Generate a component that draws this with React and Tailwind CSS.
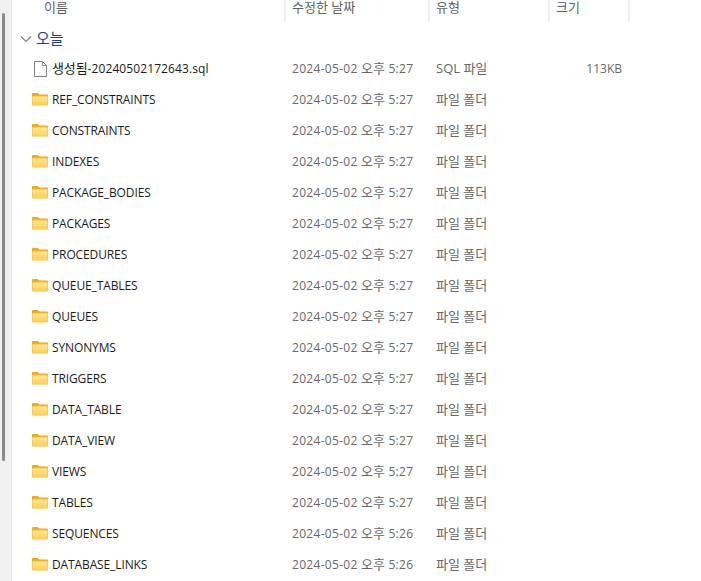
const rows = [
  ["REF_CONSTRAINTS", "5:27"],["CONSTRAINTS", "5:27"],["INDEXES", "5:27"],["PACKAGE_BODIES", "5:27"],["PACKAGES", "5:27"],
  ["PROCEDURES", "5:27"],["QUEUE_TABLES", "5:27"],["QUEUES", "5:27"],["SYNONYMS", "5:27"],["TRIGGERS", "5:27"],
  ["DATA_TABLE", "5:27"],["DATA_VIEW", "5:27"],["VIEWS", "5:27"],["TABLES", "5:27"],["SEQUENCES", "5:26"],["DATABASE_LINKS", "5:26"],
];

function Folder() {
  return (
    <svg width="16" height="14" viewBox="0 0 16 14" className="-mt-[2px] block">
      <defs>
        <linearGradient id="fg" x1="0" y1="0" x2="0" y2="1">
          <stop offset="0" stopColor="#ffe69a" />
          <stop offset="1" stopColor="#fccf55" />
        </linearGradient>
      </defs>
      <path d="M0 2 Q0 1 1 1 H5.5 L7.5 2.5 H15 Q16 2.5 16 3.5 V6 H0 Z" fill="#eeaa10" />
      <rect x="0" y="3.5" width="16" height="10" rx="1" fill="#f3bd2e" />
      <rect x="0.5" y="4.5" width="15" height="8.5" rx="0.5" fill="url(#fg)" />
    </svg>
  );
}

function FileIcon() {
  return (
    <svg width="13" height="16" viewBox="0 0 13 16" className="ml-[2px] block">
      <path d="M0.5 0.5 H8.5 L12.5 4.5 V15.5 H0.5 Z" fill="#fff" stroke="#808080" />
      <path d="M8.5 0.5 V4.5 H12.5" fill="none" stroke="#808080" />
    </svg>
  );
}

function Row({ icon, name, time, type, size }) {
  return (
    <div className="flex h-[31px] items-center text-[12px] leading-[16px]">
      <div className="flex w-[292px] items-center pl-[32px]">
        <div className="flex w-[20px] justify-start">{icon}</div>
        <span className="tracking-[-0.12px] text-[#1a1a1a]">{name}</span>
      </div>
      <div className="w-[144px] tracking-[0.3px] text-[#676767]">
        2024-05-02 <span className="text-[13px] tracking-normal">오후</span> {time}
      </div>
      <div className="w-[120px] -translate-y-px text-[13px] text-[#676767]">{type}</div>
      <div className="w-[66px] text-right text-[#676767]">{size}</div>
    </div>
  );
}

function Head({ w, label, cls }) {
  return (
    <div className={`flex h-[21px] items-start border-r-2 border-[#eeeeee] text-[13px] leading-[14px] text-[#5f5f5f] ${w} ${cls || ""}`}>
      {label}
    </div>
  );
}

export default function App() {
  return (
    <div className="flex h-[581px] w-[701px] overflow-hidden bg-white font-['Open_Sans','Noto_Sans_CJK_KR',sans-serif]">
      <div className="flex h-full w-[12px] shrink-0 flex-col border-r border-[#e4e4e4] bg-[#f0f0f0] pl-[1px]">
        <div className="ml-[1px] mt-[13px] h-[448px] w-[3px] rounded-sm bg-[#8a8a8a]" />
      </div>
      <div className="min-w-0 flex-1">
        <div className="flex h-[21px]">
          <Head w="w-[274px]" label="이름" cls="pl-[32px]" />
          <Head w="w-[144px]" label="수정한 날짜" cls="pl-[6px]" />
          <Head w="w-[120px]" label="유형" cls="pl-[6px]" />
          <Head w="w-[80px]" label="크기" cls="pl-[6px]" />
        </div>
        <div className="ml-[-12px] mt-[3px]">
          <div className="flex h-[29px] items-center pl-[20px] text-[15px] text-[#1f3a93]">
            <svg width="12" height="12" viewBox="0 0 12 12" className="mr-[4px]">
              <path d="M1 3.5 L6 8.5 L11 3.5" fill="none" stroke="#808080" strokeWidth="1.1" />
            </svg>
            오늘
          </div>
          <Row
            icon={<FileIcon />}
            name={<><span className="text-[13px]">생성됨</span><span className="tracking-[0.1px]">-20240502172643.sql</span></>}
            time="5:27"
            type="SQL 파일"
            size="113KB"
          />
          {rows.map(([n, t]) => (
            <Row key={n} icon={<Folder />} name={n} time={t} type="파일 폴더" />
          ))}
        </div>
      </div>
    </div>
  );
}
